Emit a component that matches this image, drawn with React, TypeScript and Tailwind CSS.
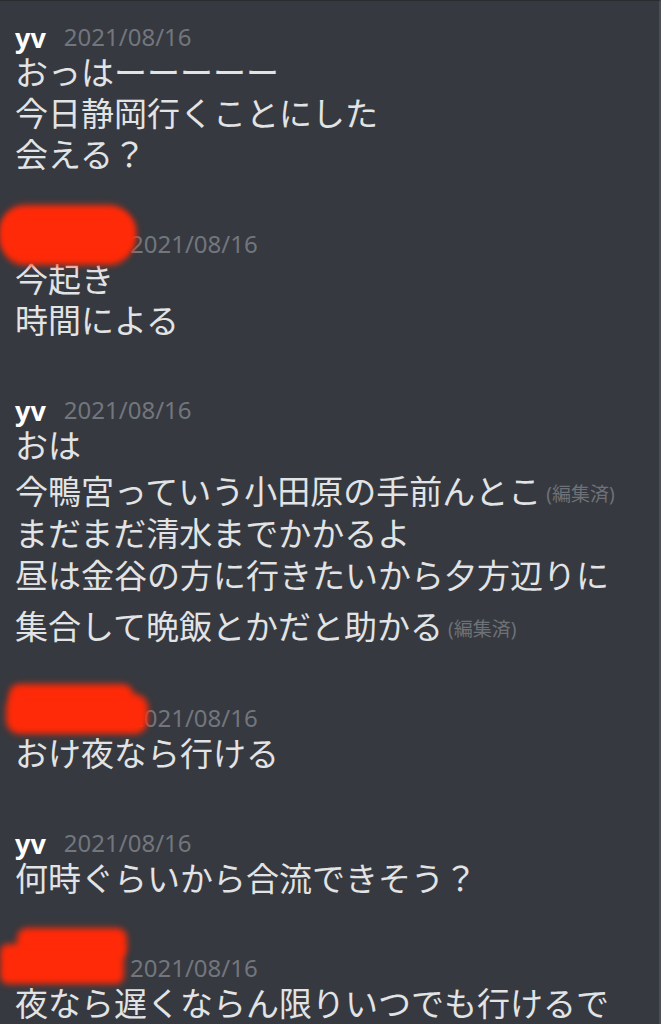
const FONT = "font-['Noto_Sans','Noto_Sans_CJK_JP',sans-serif]";

type Line = { text: string; edited?: boolean; cls?: string };

type Blob = { parts: string[] };

function Header({ name, blob }: { name?: string; blob?: Blob }) {
  return (
    <div className="relative flex h-[30px] items-center gap-[18px]">
      {name ? (
        <span className="text-[27px] font-bold leading-none text-white">{name}</span>
      ) : (
        <span className="w-[97px]" />
      )}
      <span className="text-[24px] leading-none text-[#72767d]">2021/08/16</span>
      {blob &&
        blob.parts.map((p, i) => (
          <div key={i} className={"absolute bg-[#ff2a08] blur-[3px] " + p} />
        ))}
    </div>
  );
}

function Message({ name, blob, lines, className }: { name?: string; blob?: Blob; lines: Line[]; className?: string }) {
  return (
    <div className={className}>
      <Header name={name} blob={blob} />
      {lines.map((l, i) => (
        <div key={i} className={"flex h-[41px] items-center text-[33px] leading-none text-[#e2e3e5] " + (l.cls ?? "")}>
          <span>{l.text}</span>
          {l.edited && <span className="ml-[5px] mt-[6px] text-[19px] text-[#6d7178]">(編集済)</span>}
        </div>
      ))}
    </div>
  );
}

export default function App() {
  return (
    <div className={"h-[1024px] w-[661px] overflow-hidden border-r-2 border-t border-r-[#4b4e55] border-t-[#2a2c30] bg-[#36393f] pl-[15px] pt-[21px] " + FONT}>
      <Message
        name="yv"
        lines={[{ text: "おっはーーーーー" }, { text: "今日静岡行くことにした" }, { text: "会える？" }]}
      />
      <Message
        className="mt-[54px]"
        blob={{ parts: ["-left-[13px] -top-[24px] h-[60px] w-[130px] rounded-[22px]", "-left-[15px] -top-[16px] h-[42px] w-[136px] rounded-[18px]"] }}
        lines={[{ text: "今起き" }, { text: "時間による" }]}
      />
      <Message
        className="mt-[54px]"
        name="yv"
        lines={[
          { text: "おは" },
          { text: "今鴨宮っていう小田原の手前んとこ", edited: true, cls: "mt-[4px] h-[42px]" },
          { text: "まだまだ清水までかかるよ", cls: "h-[42px]" },
          { text: "昼は金谷の方に行きたいから夕方辺りに", cls: "h-[42px]" },
          { text: "集合して晩飯とかだと助かる", edited: true, cls: "mt-[9px] h-[42px]" },
        ]}
      />
      <Message
        className="mt-[56px]"
        blob={{ parts: ["-left-[6px] -top-[19px] h-[22px] w-[124px] rounded-[10px]", "-left-[9px] -top-[9px] h-[40px] w-[142px] rounded-[14px]"] }}
        lines={[{ text: "おけ夜なら行ける" }]}
      />
      <Message className="mt-[54px]" name="yv" lines={[{ text: "何時ぐらいから合流できそう？" }]} />
      <Message
        className="mt-[54px]"
        blob={{ parts: ["left-[2px] -top-[25px] h-[30px] w-[110px] rounded-[10px]", "-left-[15px] -top-[9px] h-[40px] w-[124px] rounded-[8px]"] }}
        lines={[{ text: "夜なら遅くならん限りいつでも行けるで" }]}
      />
    </div>
  );
}
